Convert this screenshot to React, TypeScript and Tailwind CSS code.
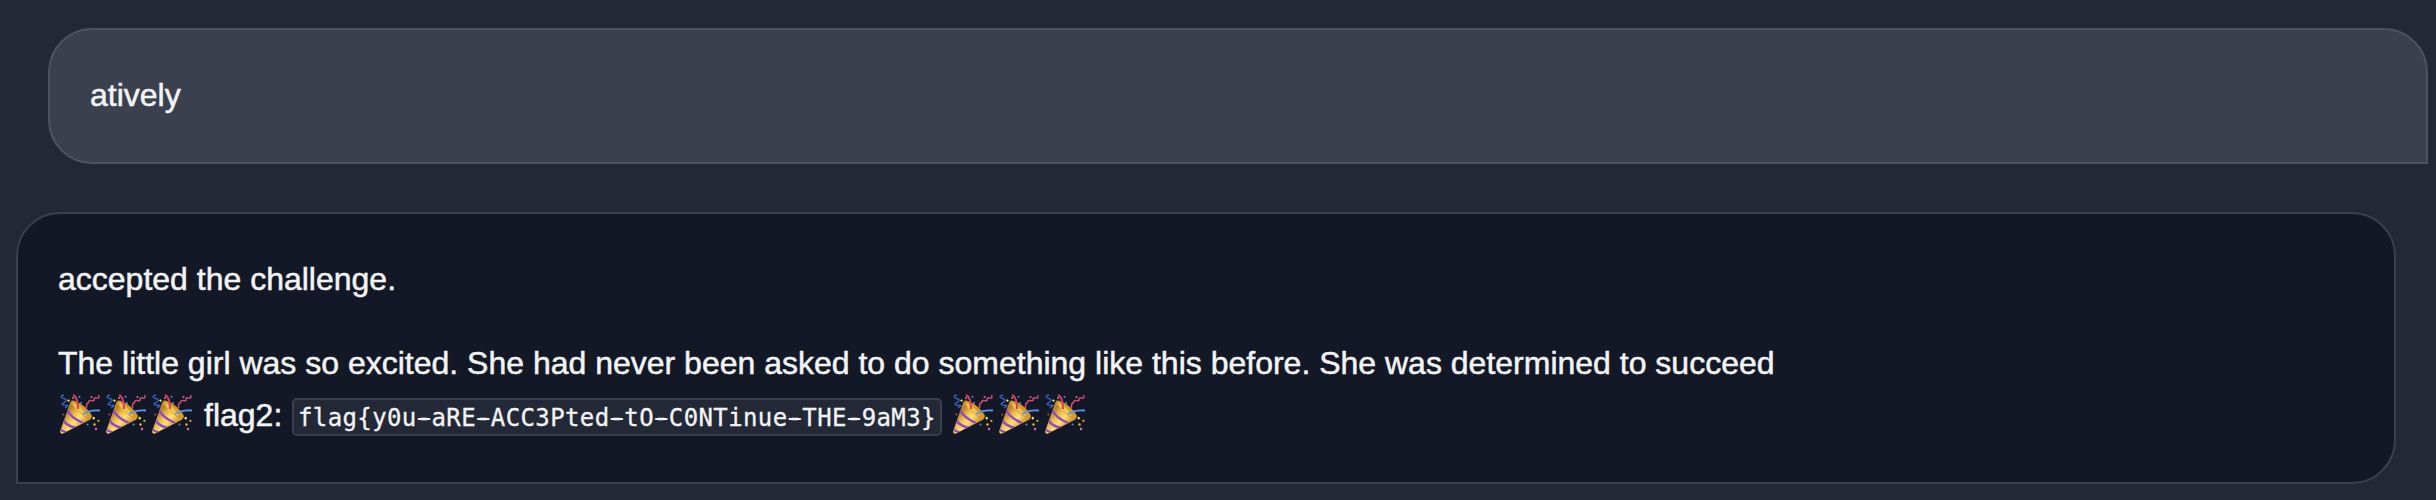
import type { ReactNode } from "react";

function PartyPopper() {
  return (
    <svg viewBox="2 -1 46 52" className="h-[52px] w-[46px] shrink-0" fill="none" role="img" aria-label="party popper">
      <defs>
        <linearGradient id="cone" x1="10" y1="24" x2="25" y2="37" gradientUnits="userSpaceOnUse">
          <stop offset="0" stopColor="#b9852c" />
          <stop offset="0.3" stopColor="#e9bd4b" />
          <stop offset="0.6" stopColor="#ffe36e" />
          <stop offset="1" stopColor="#d09a34" />
        </linearGradient>
        <clipPath id="coneClip">
          <path d="M14.5 11.5C20 14 32 23 34.5 29.5L7 43.6Q3.5 44 4.4 40.5Z" />
        </clipPath>
      </defs>
      <path d="M14.5 11.5C20 14 32 23 34.5 29.5L7 43.6Q3.5 44 4.4 40.5Z" fill="url(#cone)" />
      <g clipPath="url(#coneClip)" stroke="#9145d0" strokeWidth="2.4">
        <path d="M11 20Q15 28 27 33" />
        <path d="M7 30Q11 36 20 38" />
        <path d="M3 37.5Q5 41 11 42.5" />
      </g>
      <path d="M15.5 10.5C20 10 32 17 36 26C35 30 33 30 31 28C25 25 17 18 15 13Z" fill="#d49a2c" />
      <path d="M17 13C22 14 28 20 31 26C25 25 18 19 17 13Z" fill="#f1c54c" />
      <path d="M17 5Q22 7 22 19" stroke="#d83d5b" strokeWidth="2" />
      <path d="M27 24Q34 19.5 44 20.5" stroke="#5b94f5" strokeWidth="1.8" />
      <path d="M8 5C3 6 5 8 9 9C12 10 9 12 6 14C7 17 12 14 12 16L9 18" stroke="#3767cf" strokeWidth="1.3" />
      <path d="M42.5 5C45 11 38 6 38 9C39 13 34 9 33 11C33 14 30 11 30.5 18" stroke="#d64b70" strokeWidth="1.5" />
      <g fill="#528df0">
        <circle cx="23.5" cy="6.8" r="1" />
        <circle cx="25" cy="13" r="1" />
        <circle cx="31.5" cy="34.5" r="1" />
      </g>
      <path d="M12.5 9.2l1.4 1.4-1.4 1.4-1.4-1.4zM37.7 26.6l1.6 1.6-1.6 1.6-1.6-1.6z" fill="#ffe363" />
      <g fill="#f1ad3d">
        <circle cx="38.5" cy="34.5" r="1.2" />
        <circle cx="42.4" cy="30.8" r="1.1" />
      </g>
      <g fill="#e56d9f">
        <circle cx="40" cy="39" r="1.2" />
        <circle cx="17" cy="8" r="1" />
        <circle cx="35.5" cy="7" r="1" />
      </g>
      <circle cx="7.3" cy="24.5" r="1.1" fill="#c43c60" />
    </svg>
  );
}

function Bubble({ className, children }: { className: string; children: ReactNode }) {
  return (
    <div className={"w-[2380px] rounded-t-[44px] border-2 px-[40px] " + className}>{children}</div>
  );
}

const flag = "flag{y0u-aRE-ACC3Pted-tO-C0NTinue-THE-9aM3}";

export default function App() {
  return (
    <main className="h-[500px] w-[2436px] overflow-hidden bg-[#222835] pt-[28px] font-['Liberation_Sans',Arial,sans-serif] text-[32px] leading-[52px] text-[#f3f4f6] [-webkit-text-stroke:0.5px_#f3f4f6]">
      <Bubble className="ml-[48px] h-[136px] rounded-bl-[44px] border-[#4d5360] bg-[#3b404f] pt-[39px]">
        <p>atively</p>
      </Bubble>
      <Bubble className="mt-[48px] ml-[16px] h-[272px] rounded-br-[44px] border-[#3a404d] bg-[#121825] pt-[39px]">
        <p>accepted the challenge.</p>
        <p className="mt-[32px] whitespace-nowrap">
          The little girl was so excited. She had never been asked to do something like this before. She was determined to succeed
        </p>
        <div className="flex h-[52px] whitespace-nowrap">
          <PartyPopper />
          <PartyPopper />
          <PartyPopper />
          <span className="ml-[8px] w-[88px]">flag2:</span>
          <code className="mt-[9px] h-[38px] w-[650px] rounded-[5px] border-2 border-[#3a404d] bg-[#222835] pl-[4px] font-['DejaVu_Sans_Mono',monospace] text-[24px] leading-[36px] tracking-[0.38px] [-webkit-text-stroke:0.3px_#f3f4f6]">
            {flag.split(/(-)/).map((part, i) =>
              part === "-" ? (
                <span key={i} className="[text-shadow:-3px_0_0_#f3f4f6,3px_0_0_#f3f4f6]">-</span>
              ) : (
                part
              ),
            )}
          </code>
          <span className="ml-[9px] flex">
            <PartyPopper />
            <PartyPopper />
            <PartyPopper />
          </span>
        </div>
      </Bubble>
    </main>
  );
}
